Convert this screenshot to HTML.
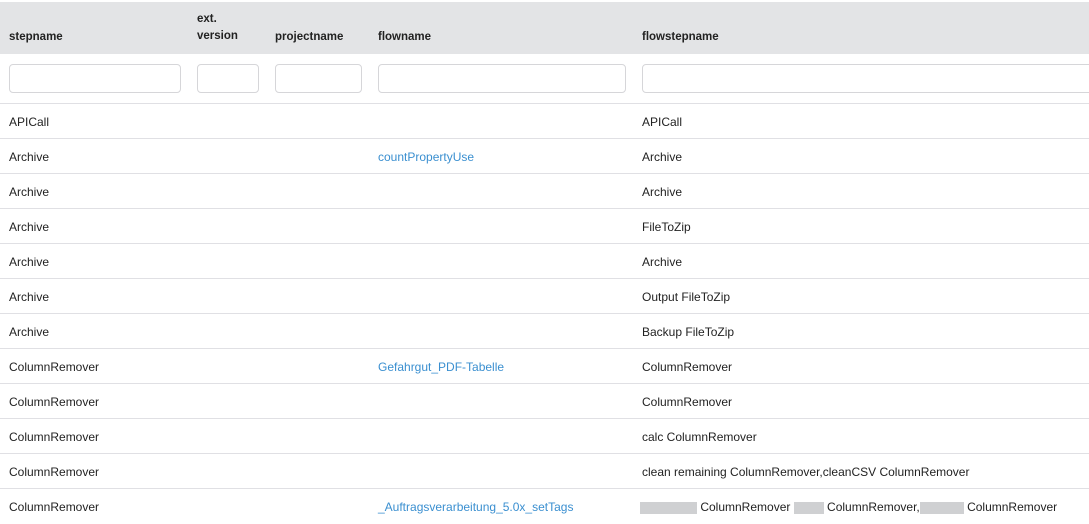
<!DOCTYPE html><html><head><style>
body{margin:0;width:1089px;height:520px;overflow:hidden;background:#fff;font-family:"Liberation Sans",sans-serif;font-size:12px;color:#222}
.hd{position:absolute;top:2px;left:0;width:1089px;height:52px;background:#e3e4e6}
.h{position:absolute;font-weight:bold;font-size:11.5px;color:#222;line-height:17px}
.in{position:absolute;top:64px;height:29px;border:1px solid #d6d6d9;border-radius:4px;background:#fff;box-sizing:border-box}
.row{position:absolute;left:0;width:1089px;height:35px;border-top:1px solid #e0e0e4}
.c{position:absolute;top:10px;line-height:16px}
a{color:#3a8fd0;text-decoration:none}
.b{display:inline-block;height:12px;background:#cfd0d2;vertical-align:middle}
</style></head><body>
<div class="hd"></div>
<div class="h" style="left:9px;top:29px">stepname</div>
<div class="h" style="left:197px;top:11px">ext.<br>version</div>
<div class="h" style="left:275px;top:29px">projectname</div>
<div class="h" style="left:378px;top:29px">flowname</div>
<div class="h" style="left:642px;top:29px">flowstepname</div>
<div class="in" style="left:9px;width:172px"></div>
<div class="in" style="left:197px;width:62px"></div>
<div class="in" style="left:275px;width:87px"></div>
<div class="in" style="left:378px;width:248px"></div>
<div class="in" style="left:642px;width:460px"></div>
<div class="row" style="top:103px"><span class="c" style="left:9px">APICall</span><span class="c" style="left:642px">APICall</span></div>
<div class="row" style="top:138px"><span class="c" style="left:9px">Archive</span><span class="c" style="left:378px"><a>countPropertyUse</a></span><span class="c" style="left:642px">Archive</span></div>
<div class="row" style="top:173px"><span class="c" style="left:9px">Archive</span><span class="c" style="left:642px">Archive</span></div>
<div class="row" style="top:208px"><span class="c" style="left:9px">Archive</span><span class="c" style="left:642px">FileToZip</span></div>
<div class="row" style="top:243px"><span class="c" style="left:9px">Archive</span><span class="c" style="left:642px">Archive</span></div>
<div class="row" style="top:278px"><span class="c" style="left:9px">Archive</span><span class="c" style="left:642px">Output FileToZip</span></div>
<div class="row" style="top:313px"><span class="c" style="left:9px">Archive</span><span class="c" style="left:642px">Backup FileToZip</span></div>
<div class="row" style="top:348px"><span class="c" style="left:9px">ColumnRemover</span><span class="c" style="left:378px"><a>Gefahrgut_PDF-Tabelle</a></span><span class="c" style="left:642px">ColumnRemover</span></div>
<div class="row" style="top:383px"><span class="c" style="left:9px">ColumnRemover</span><span class="c" style="left:642px">ColumnRemover</span></div>
<div class="row" style="top:418px"><span class="c" style="left:9px">ColumnRemover</span><span class="c" style="left:642px">calc ColumnRemover</span></div>
<div class="row" style="top:453px"><span class="c" style="left:9px">ColumnRemover</span><span class="c" style="left:642px">clean remaining ColumnRemover,cleanCSV ColumnRemover</span></div>
<div class="row" style="top:488px"><span class="c" style="left:9px">ColumnRemover</span><span class="c" style="left:378px"><a>_Auftragsverarbeitung_5.0x_setTags</a></span><span class="c" style="left:640px"><span class="b" style="width:57px"></span> ColumnRemover <span class="b" style="width:30px"></span> ColumnRemover,<span class="b" style="width:44px"></span> ColumnRemover</span></div>
</body></html>
